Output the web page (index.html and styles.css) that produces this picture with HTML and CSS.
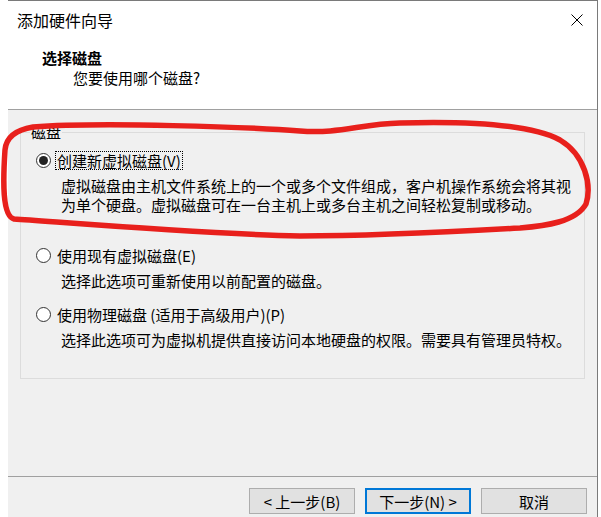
FILE: index.html
```html
<!DOCTYPE html>
<html lang="zh-CN">
<head>
    <meta charset="UTF-8">
    <meta name="viewport" content="width=device-width, initial-scale=1.0">
    <title>添加硬件向导</title>
    <link rel="stylesheet" href="styles.css">
</head>
<body>
    <div class="window">
        <div class="header">
            <div class="titlebar">
                <span class="title">添加硬件向导</span>
                <svg class="close" width="12" height="12" viewBox="0 0 12 12">
                    <path d="M0.5 0.5 L11.5 11.5 M11.5 0.5 L0.5 11.5" stroke="#000" stroke-width="1" fill="none"/>
                </svg>
            </div>
            <div class="heading">选择磁盘</div>
            <div class="subheading">您要使用哪个磁盘?</div>
        </div>
        <div class="content">
            <fieldset class="group">
                <legend>磁盘</legend>
                <div class="option first">
                    <div class="row">
                        <span class="radio checked"></span>
                        <span class="label focused">创建新虚拟磁盘(V)</span>
                    </div>
                    <p class="desc">虚拟磁盘由主机文件系统上的一个或多个文件组成，客户机操作系统会将其视<br>为单个硬盘。虚拟磁盘可在一台主机上或多台主机之间轻松复制或移动。</p>
                </div>
                <div class="option">
                    <div class="row">
                        <span class="radio"></span>
                        <span class="label">使用现有虚拟磁盘(E)</span>
                    </div>
                    <p class="desc">选择此选项可重新使用以前配置的磁盘。</p>
                </div>
                <div class="option">
                    <div class="row">
                        <span class="radio"></span>
                        <span class="label">使用物理磁盘 (适用于高级用户)(P)</span>
                    </div>
                    <p class="desc">选择此选项可为虚拟机提供直接访问本地硬盘的权限。需要具有管理员特权。</p>
                </div>
            </fieldset>
        </div>
        <div class="footer">
            <button class="btn">&lt; 上一步(B)</button>
            <button class="btn default">下一步(N) &gt;</button>
            <button class="btn">取消</button>
        </div>
    </div>
    <!-- red marker drawn over the first option -->
    <svg class="marker" width="601" height="517" viewBox="0 0 601 517">
        <path d="M33 127 C100 122, 250 127, 300 131 C340 134, 360 124, 400 123 C470 121, 530 124, 560 140 C585 155, 592 185, 586 204 C576 222, 545 226, 520 228 C450 232, 350 236, 300 236 C200 234, 60 222, 14 219 C2 216, 3 180, 5 150 C6 138, 15 130, 33 127 Z" stroke="#e8201c" stroke-width="5.5" fill="none" stroke-linecap="round" stroke-linejoin="round"/>
    </svg>
</body>
</html>
```

FILE: styles.css
```css
body {
    margin: 0;
    background: #fff;
    font-family: "Noto Sans CJK SC", sans-serif;
    font-size: 15px;
    color: #000;
    width: 601px;
    height: 517px;
    overflow: hidden;
    position: relative;
}
.window {
    margin-left: 8px;
    width: 589px;
    border-top: 1px solid #7a7a7a;
    border-right: 1px solid #7a7a7a;
    background: #f0f0f0;
}
.header {
    background: #fff;
    border-bottom: 1px solid #a0a0a0;
    height: 109px;
    box-sizing: border-box;
}
.titlebar {
    height: 38px;
    display: flex;
    align-items: center;
    justify-content: space-between;
    padding: 0 14px 0 9px;
}
.title {
    font-size: 16px;
    line-height: 20px;
}
.heading {
    margin-top: 9px;
    padding-left: 34px;
    font-weight: bold;
    line-height: 20px;
}
.subheading {
    padding-left: 65px;
    line-height: 20px;
}
.content {
    height: 366px;
    padding: 14px 12px 0;
    box-sizing: border-box;
}
.group {
    margin: 0;
    padding: 11px 10px 29px 15px;
    border: 1px solid #dcdcdc;
}
.group legend {
    padding: 0 1px;
    margin-left: -6px;
    line-height: 16px;
}
.option {
    margin-bottom: 15px;
}
.option.first {
    margin-bottom: 32px;
}
.option:last-child {
    margin-bottom: 0;
}
.row {
    display: flex;
    align-items: center;
    height: 19px;
}
.radio {
    flex: none;
    width: 15px;
    height: 15px;
    border: 1px solid #333;
    border-radius: 50%;
    background: #fff;
    box-sizing: border-box;
    display: flex;
    align-items: center;
    justify-content: center;
    margin-right: 4px;
}
.radio.checked::after {
    content: "";
    width: 9px;
    height: 9px;
    border-radius: 50%;
    background: #222;
}
.label {
    line-height: 17px;
    padding: 0 1px;
    border: 1px dotted transparent;
}
.label.focused {
    border-color: #000;
}
.desc {
    margin: 6px 0 0 25px;
    line-height: 19px;
}
.footer {
    border-top: 1px solid #a0a0a0;
    display: flex;
    justify-content: flex-end;
    gap: 10px;
    padding: 11px 10px 0;
    height: 40px;
}
.btn {
    width: 106px;
    height: 26px;
    background: #e1e1e1;
    border: 1px solid #adadad;
    font-family: inherit;
    font-size: 15px;
    color: #000;
    padding: 0;
}
.btn.default {
    border: 2px solid #0078d7;
}
.marker {
    position: absolute;
    top: 0;
    left: 0;
    pointer-events: none;
}
```
